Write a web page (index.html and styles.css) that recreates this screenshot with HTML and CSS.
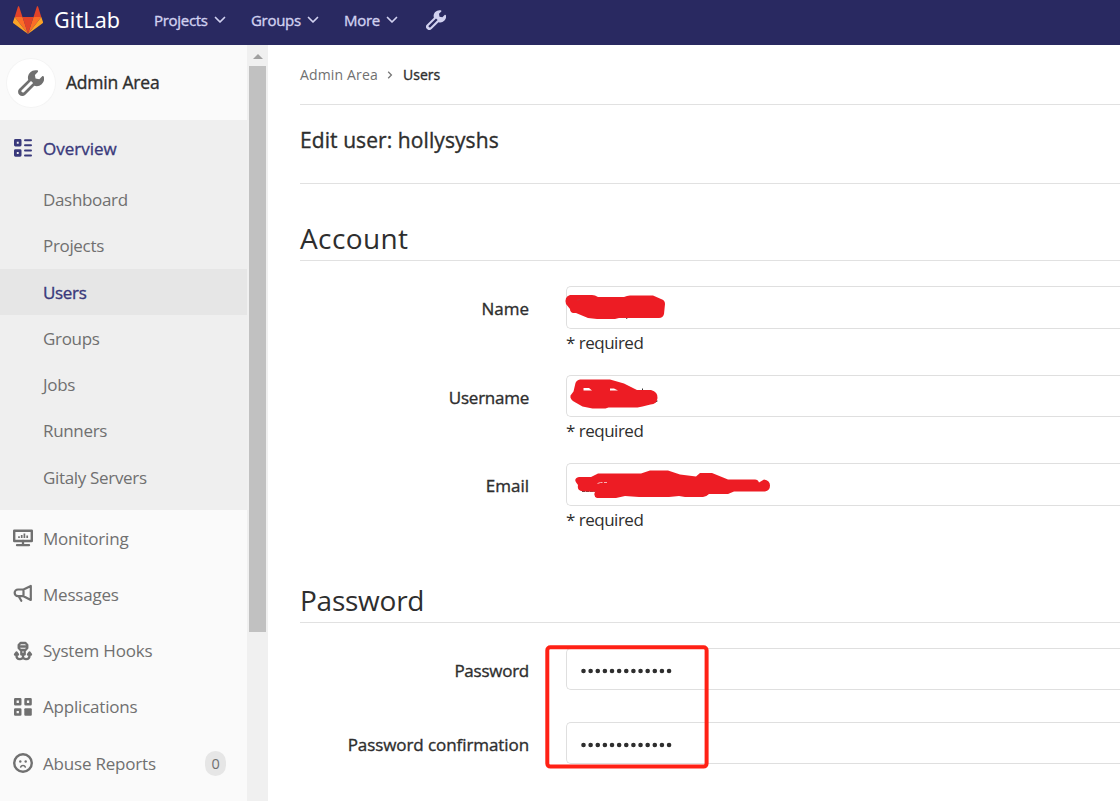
FILE: index.html
```html
<!DOCTYPE html>
<html lang="en">
<head>
<meta charset="utf-8">
<title>Edit user · GitLab</title>
<link rel="stylesheet" href="styles.css">
</head>
<body>
<svg class="defs" width="0" height="0">
  <symbol id="wrench" viewBox="0 0 16 16"><path fill-rule="evenodd" d="M11.2 0.2a4.6 4.6 0 0 0-4.9 5.900L.8 11.500a2.600 2.600 0 0 0 3.700 3.700l5.500-5.500a4.600 4.600 0 0 0 5.900-5.500c-.1-.5-.7-.6-1-.3l-1.800 1.800-2.300-.4-.4-2.300L12.200 1.200c.3-.4.1-1-.5-1zM8 6.700l1.300 1.300-5.700 5.700c-.9.700-2.100-.5-1.300-1.300z"/></symbol>
  <symbol id="chevron" viewBox="0 0 12 8"><path d="M1.500 1.500 6 6l4.500-4.500" fill="none" stroke="currentColor" stroke-width="1.700" stroke-linecap="round" stroke-linejoin="round"/></symbol>
</svg>
<header class="navbar">
  <svg class="logo" viewBox="0 0 30 28">
    <path fill="#e24329" d="M15 28 9.500 11h11z"/><path fill="#fc6d26" d="M15 28 9.500 11H1.700zM15 28l5.500-17h7.800z"/>
    <path fill="#fca326" d="M1.700 11 0 16c-.1.500 0 1 .4 1.300L15 28zM28.300 11l1.700 5c.1.500 0 1-.4 1.300L15 28z"/>
    <path fill="#e24329" d="M1.700 11h7.800L6.100.6c-.2-.6-.9-.6-1.100 0zM28.300 11h-7.800L23.900.6c.2-.6.9-.6 1.100 0z"/>
  </svg>
  <span class="brand">GitLab</span>
  <nav class="menu">
    <a class="menu-item m-projects">Projects</a><svg class="chev"><use href="#chevron"/></svg>
    <a class="menu-item m-groups">Groups</a><svg class="chev"><use href="#chevron"/></svg>
    <a class="menu-item m-more">More</a><svg class="chev"><use href="#chevron"/></svg>
  </nav>
  <svg class="nav-wrench"><use href="#wrench"/></svg>
</header>
<div class="page">
  <aside class="sidebar">
    <div class="context"><span class="avatar"><svg><use href="#wrench"/></svg></span><span class="context-title">Admin Area</span></div>
    <section class="group">
      <a class="row active"><svg class="icon" viewBox="0 0 20 20"><path fill="none" stroke="currentColor" stroke-width="2.800" stroke-linejoin="round" d="M2.400 2.400h4.700v4.700H2.400zM2.400 12.600h4.700v4.700H2.400z"/><path stroke="currentColor" stroke-width="2" stroke-linecap="round" d="M12 2.200h6M12 7.200h6M12 12.500h6M12 17.500h6"/></svg><span>Overview</span></a>
      <a class="sub"><span>Dashboard</span></a>
      <a class="sub"><span>Projects</span></a>
      <a class="sub current"><span>Users</span></a>
      <a class="sub"><span>Groups</span></a>
      <a class="sub"><span>Jobs</span></a>
      <a class="sub"><span>Runners</span></a>
      <a class="sub"><span>Gitaly Servers</span></a>
    </section>
    <a class="row"><svg class="icon" viewBox="0 0 20 20"><path fill="none" stroke="currentColor" stroke-width="2.400" stroke-linejoin="round" d="M1.200 2.700h17.600v10.300H1.200z"/><path fill="none" stroke="currentColor" stroke-width="2.300" stroke-linecap="round" d="M10 13v3M4 17.200h12"/><path stroke="currentColor" stroke-width="1.700" d="M6 8.300v1.700M8.700 7v3M11.400 5.500v4.500M14.200 7.500v2.500"/></svg><span>Monitoring</span></a>
    <a class="row"><svg class="icon" viewBox="0 0 20 20"><path fill="none" stroke="currentColor" stroke-width="2.200" stroke-linejoin="round" stroke-linecap="round" d="M10.500 5.500 17.800 2v14l-7.300-3.800H5a3.300 3.300 0 0 1 0-6.700zM10.500 5.500v6.700M5.800 12.500l2.500 4.300"/></svg><span>Messages</span></a>
    <a class="row"><svg class="icon" viewBox="0 0 20 20"><path fill="none" stroke="currentColor" stroke-width="2.300" stroke-linejoin="round" stroke-linecap="round" d="M7.500 2h5l1.800 2v3l-1.800 2h-5L5.700 7V4zM6 5.500h8M8.300 9.500v4M11.700 9.500v4M10 13v3M3.500 12v3c0 4 6.500 4 6.500.8 0 3.200 6.500 3.200 6.500-.8v-3M2 13.500l1.500-2L5 13.500M15 13.500l1.500-2 1.500 2"/></svg><span>System Hooks</span></a>
    <a class="row"><svg class="icon" viewBox="0 0 20 20"><path fill="none" stroke="currentColor" stroke-width="2.600" stroke-linejoin="round" d="M2.300 2.300h4.900v4.900H2.300zM12.600 2.300h4.900v4.900h-4.900zM2.300 12.600h4.900v4.900H2.300z"/><rect x="11.300" y="11.300" width="7.500" height="7.500" rx="1" fill="currentColor"/></svg><span>Applications</span></a>
    <a class="row"><svg class="icon" viewBox="0 0 20 20"><circle cx="10" cy="10" r="8.800" fill="none" stroke="currentColor" stroke-width="2.400"/><circle cx="7.300" cy="8.500" r="1.200" fill="currentColor"/><circle cx="12.700" cy="8.500" r="1.200" fill="currentColor"/><path fill="none" stroke="currentColor" stroke-width="1.600" stroke-linecap="round" d="M7.700 14c.7-2 3.900-2 4.600 0"/></svg><span>Abuse Reports</span><b class="count">0</b></a>
  </aside>
  <div class="scrollbar"><i class="arrow"></i><i class="thumb"></i></div>
  <main class="content">
    <div class="crumbs"><span class="crumb">Admin Area</span><svg class="sep" viewBox="0 0 6 8"><path d="m1.200.8 3.200 3.200-3.200 3.200" fill="none" stroke="#777" stroke-width="1.300"/></svg><span class="crumb-now">Users</span></div>
    <h3 class="title"><span>Edit user: hollysyshs</span></h3>
    <h2 class="legend account"><span>Account</span></h2>
    <div class="field"><label>Name</label><div class="control"><div class="input"></div><p class="hint">* required</p></div></div>
    <div class="field"><label class="l-user">Username</label><div class="control"><div class="input"></div><p class="hint">* required</p></div></div>
    <div class="field"><label>Email</label><div class="control"><div class="input"></div><p class="hint">* required</p></div></div>
    <h2 class="legend password"><span>Password</span></h2>
    <div class="field pw"><label class="l-user">Password</label><div class="control"><div class="input dots"><svg viewBox="0 0 94 6"><path d="M3.500 3H93" stroke="#2e2e2e" stroke-width="4.600" stroke-linecap="round" stroke-dasharray="0 7.130"/></svg></div></div></div>
    <div class="field pw"><label class="l-conf">Password confirmation</label><div class="control"><div class="input dots"><svg viewBox="0 0 94 6"><path d="M3.500 3H93" stroke="#2e2e2e" stroke-width="4.600" stroke-linecap="round" stroke-dasharray="0 7.130"/></svg></div></div></div>
  </main>
</div>
<svg class="marks" viewBox="0 0 1120 801">
  <path d="M610 318.500h3M626 318.500l3-1.500M642.500 388.500v3M655 402l2.500-1M582 491.500h14" stroke="#333" stroke-width="1" stroke-dasharray="3 1"/>
  <g fill="#ed1c24">
    <path d="M570 295h22q3 0 6 2h26q3-1.500 6-1.500h23l8 3.500q4 1 4 5l-1 10q-1 4-5 4h-40l-4 1h-18l-9-1-12-5h-3q-3-1-3-4l-4-5q-2-7 4-9z"/>
    <path fill-rule="evenodd" d="M580 379.500h30l14 4 13 6.500h14q7 2 6.500 8t-7 6.500l-8 2-5 1h-29l-3 1h-13l-10-2-7-4q-6-3-5-7l3-4 2-8.500q1-3 4.500-3.500zM583.500 388v2.500h8.500l-3-2.500zM610 388.500v2h8l-4-2z"/>
    <path d="M579 477h12l7-3.500h43l9-3h18l12 4 16 2 4-3.500h12l16 6.500h27q3 0 4 3l5-3q6 1 6 6t-5 6h-31l-6 2.500h-19q-3 3-6 3h-18l-6-1-10 1h-30l-14-1-9 2h-19q-4-2-2-6l-14-1q-4-1-3-6-6-6 1-8z"/>
  </g>
  <path d="M597.500 483.500l3-1h2M604 482.500h3" stroke="#f6b5b7" stroke-width="1" fill="none"/>
  <path d="M577 300l3-.500M582 491.500h14" stroke="#b44" stroke-width=".5" fill="none"/>
  <rect x="547.300" y="647.300" width="159.300" height="119.300" rx="3" fill="none" stroke="#ff2115" stroke-width="4"/>
</svg>
</body>
</html>
```
FILE: styles.css
```css
* { box-sizing: border-box; }
body { margin: 0; width: 1120px; height: 801px; overflow: hidden; position: relative; background: #fff; color: #2e2e2e; font-family: "Open Sans", "Noto Sans", sans-serif; font-size: 17px; }
.defs { position: absolute; }
svg { display: block; flex: none; fill: currentColor; }
span, label, a { white-space: nowrap; }
.navbar { height: 45px; background: #292961; color: #d1d1f0; display: flex; align-items: center; padding: 0 0 5px 13px; }
.logo { width: 30px; height: 28px; }
.brand { margin-left: 11px; width: 66px; color: #fff; font-family: "Noto Sans", sans-serif; font-size: 21.500px; line-height: 28px; letter-spacing: 0.100px; }
.menu { display: flex; align-items: center; margin-left: 34px; font-size: 15px; }
.menu-item { letter-spacing: -0.300px; }
.m-projects { width: 60px; } .m-groups { width: 56px; } .m-more { width: 42px; }
.menu-item, .context-title, .active span, .current span, .crumb-now, .title, .field label { -webkit-text-stroke: 0.350px currentColor; }
.chev { width: 12px; height: 8px; margin-right: 25px; }
.nav-wrench { width: 20px; height: 20px; margin-left: 3px; }
.page { display: flex; height: 756px; }
.sidebar { width: 247px; background: #fafafa; color: #707070; }
.context { display: flex; align-items: center; height: 75px; padding-left: 7px; }
.avatar { width: 48px; height: 48px; border-radius: 50%; background: #fff; box-shadow: 0 0 0 1px #f4f4f4; display: grid; place-items: center; }
.avatar svg { width: 26px; height: 26px; }
.context-title { margin-left: 11px; padding-bottom: 1px; color: #2e2e2e; font-size: 17.500px; letter-spacing: -0.200px; }
.group { background: #efefef; height: 390px; }
.row { display: flex; align-items: center; height: 56.250px; padding-left: 13px; letter-spacing: -0.200px; }
.icon { width: 20px; height: 20px; margin-right: 10px; }
.active, .current { color: #39397b; }
.active { letter-spacing: 0; }
.sub { display: flex; align-items: center; height: 46.300px; padding-left: 43px; letter-spacing: -0.330px; }
.current { background: #e6e6e6; }
.current span { padding-top: 1px; }
.count { margin-left: auto; margin-right: 21px; width: 21px; height: 25px; border-radius: 11px; background: #e6e6e6; font-size: 14.500px; font-weight: 400; display: grid; place-items: center; }
.scrollbar { width: 21px; background: #f0f0f0; padding: 9px 2px 0; }
.arrow { display: block; width: 0; border: 5px solid transparent; border-top: 0; border-bottom-color: #a0a0a0; margin: 0 0 7px 3.500px; }
.thumb { display: block; height: 566px; background: #c1c1c1; width: 17px; }
.content { flex: 1; padding-left: 32px; }
.crumbs { display: flex; align-items: center; height: 60px; border-bottom: 1px solid #e1e1e1; font-size: 14px; }
.crumb { color: #707070; width: 79px; letter-spacing: 0.150px; }
.sep { width: 6px; height: 8px; margin: 0 10px 0 8px; }
.title { margin: 0; height: 79px; border-bottom: 1px solid #e1e1e1; display: flex; align-items: center; padding-bottom: 9px; font-size: 21px; font-weight: 400; letter-spacing: 0.080px; }
.legend { margin: 0; border-bottom: 1px solid #e1e1e1; font-size: 28px; font-weight: 400; line-height: 42px; }
.account { padding-top: 33px; height: 77px; margin-bottom: 25px; letter-spacing: 0.400px; }
.password { height: 48px; margin: 23.200px 0 25px; padding-top: 4px; letter-spacing: -0.250px; }
.field { display: flex; height: 88.600px; }
.field label { width: 229px; margin-right: 37px; text-align: right; line-height: 45px; }
.field .l-user { letter-spacing: -0.250px; }
.field .l-conf { letter-spacing: -0.080px; }
.control { flex: 1; }
.input { height: 42.500px; border: 1px solid #dfdfdf; border-right: 0; border-radius: 5px 0 0 5px; }
.hint { margin: 0; line-height: 27px; letter-spacing: -0.500px; }
.pw { height: 74px; }
.dots { padding: 19px 0 0 13px; }
.dots svg { width: 94px; height: 6px; }
.marks { position: absolute; left: 0; top: 0; width: 1120px; height: 801px; }
```
